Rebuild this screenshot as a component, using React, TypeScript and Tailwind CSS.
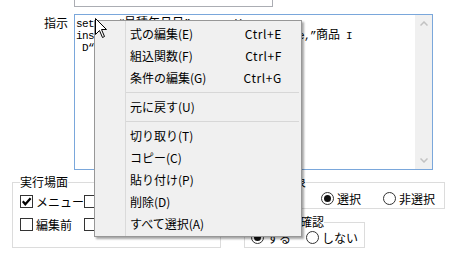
import type { ReactNode } from "react";

const menuItems: ({ label: string; keys?: string } | null)[] = [
  { label: "式の編集(E)", keys: "Ctrl+E" },
  { label: "組込関数(F)", keys: "Ctrl+F" },
  { label: "条件の編集(G)", keys: "Ctrl+G" },
  null,
  { label: "元に戻す(U)" },
  null,
  { label: "切り取り(T)" },
  { label: "コピー(C)" },
  { label: "貼り付け(P)" },
  { label: "削除(D)" },
  { label: "すべて選択(A)" },
];

function Jp({ children }: { children: ReactNode }) {
  return <span className="font-['Noto_Sans_CJK_JP',sans-serif] text-[12px] leading-[12px] tracking-normal">{children}</span>;
}

function Checkbox({ checked }: { checked?: boolean }) {
  return (
    <span className="flex h-[13px] w-[13px] shrink-0 items-center justify-center border border-[#333] bg-white">
      {checked && (
        <svg width="11" height="11" viewBox="0 0 11 11">
          <path d="M1.8 5.2 L4.3 8.3 L9.6 2.2" fill="none" stroke="#000" strokeWidth="2.2" />
        </svg>
      )}
    </span>
  );
}

function Radio({ checked }: { checked?: boolean }) {
  return (
    <span className="flex h-[13px] w-[13px] shrink-0 items-center justify-center rounded-full border border-[#333] bg-white">
      {checked && <span className="h-[7px] w-[7px] rounded-full bg-[#111]" />}
    </span>
  );
}

export default function App() {
  return (
    <div className="relative h-[258px] w-[452px] overflow-hidden bg-white text-[12px] text-black font-['Noto_Sans_CJK_JP','Noto_Sans',sans-serif]">

      {/* upper field (bottom edge only) */}
      <div className="ml-[74px] h-[7px] w-[199px] border-x border-b border-[#abadb3]" />

      {/* 指示 */}
      <div className="mt-[7px] flex">
        <div className="w-[74px] pr-[6px] pt-[1px] text-right leading-[16px]">指示</div>
        <div className="flex h-[156px] w-[359px] border border-[#7aa7db]">
          <div className="flex-1 overflow-hidden whitespace-pre pl-[1px] pt-[1px] font-['Liberation_Mono',monospace] text-[11px] tracking-[-0.6px]">
            <div className="h-[12px] leading-[12px]">
              set a= “<Jp>見積年月日</Jp>”  +  + ()
            </div>
            <div className="h-[12px] leading-[12px]">
              insertRow(DetailTable, ItemCode, Price,”<Jp>商品</Jp> I
            </div>
            <div className="h-[12px] leading-[12px]"> D“<Jp>単価</Jp>”)</div>
          </div>
          {/* scrollbar */}
          <div className="flex w-[17px] flex-col justify-between bg-[#f0f0f0]">
            <div className="flex h-[17px] items-center justify-center">
              <svg width="8" height="5" viewBox="0 0 8 5">
                <path d="M0.5 4.5 L4 1 L7.5 4.5" fill="none" stroke="#c2c2c2" strokeWidth="1.5" />
              </svg>
            </div>
            <div className="flex h-[17px] items-center justify-center">
              <svg width="8" height="5" viewBox="0 0 8 5">
                <path d="M0.5 0.5 L4 4 L7.5 0.5" fill="none" stroke="#c2c2c2" strokeWidth="1.5" />
              </svg>
            </div>
          </div>
        </div>
      </div>

      {/* option groups */}
      <div className="mt-[5px] flex gap-[23px] pl-[12px]">

        <fieldset className="w-[209px] border border-[#dcdcdc] px-[7px] pb-[12px]">
          <legend className="leading-[14px]">実行場面</legend>
          <div className="mt-[6px] grid grid-cols-[64px_auto] gap-y-[10px]">
            <label className="flex h-[13px] items-center gap-[3px]"><Checkbox checked />メニュー</label>
            <label className="flex h-[13px] items-center gap-[3px]"><Checkbox />ツール</label>
            <label className="flex h-[13px] items-center gap-[3px]"><Checkbox />編集前</label>
            <label className="flex h-[13px] items-center gap-[3px]"><Checkbox />編集後</label>
          </div>
        </fieldset>

        <div className="flex flex-col gap-[6px]">
          <fieldset className="w-[201px] border border-[#dcdcdc] px-[7px] pb-[3px]">
            <legend className="ml-[6px] leading-[14px]">選択対象</legend>
            <div className="mt-[3px] flex h-[13px] items-center gap-[22px] pl-[69px]">
              <label className="flex items-center gap-[3px]"><Radio checked />選択</label>
              <label className="flex items-center gap-[3px]"><Radio />非選択</label>
            </div>
          </fieldset>

          <fieldset className="w-[121px] border border-[#dcdcdc] px-[6px] pb-[3px]">
            <legend className="ml-[1px] leading-[14px]">実行時の確認</legend>
            <div className="mt-[2px] flex h-[13px] items-center gap-[15px]">
              <label className="flex items-center gap-[3px]"><Radio checked />する</label>
              <label className="flex items-center gap-[3px]"><Radio />しない</label>
            </div>
          </fieldset>
        </div>
      </div>

      {/* context menu */}
      <div className="absolute left-[94px] top-[20px] flex h-[217px] w-[208px] border border-[#979797] bg-[#f0f0f0] shadow-[2px_2px_2px_rgba(0,0,0,0.35)]">
        <div className="w-[31px] border-r border-[#dadada]" />
        <div className="flex-1 py-[2px]">
          {menuItems.map((item, i) =>
            item ? (
              <div key={i} className="flex h-[22px] items-center justify-between pl-[4px] pr-[19px]">
                <span>{item.label}</span>
                {item.keys && <span className="tracking-[0.6px]">{item.keys}</span>}
              </div>
            ) : (
              <div key={i} className="flex h-[7px] items-center pr-[2px]">
                <div className="h-px w-full bg-[#d7d7d7]" />
              </div>
            )
          )}
        </div>
      </div>

      {/* mouse pointer */}
      <svg className="absolute left-[95px] top-[18px]" width="13" height="21" viewBox="0 0 13 21">
        <path d="M0.5 0.5 V16.5 L4.5 12.5 L7.5 19.5 L9.5 18.5 L6.5 11.5 H11.5 Z" fill="#fff" stroke="#000" />
      </svg>
    </div>
  );
}
